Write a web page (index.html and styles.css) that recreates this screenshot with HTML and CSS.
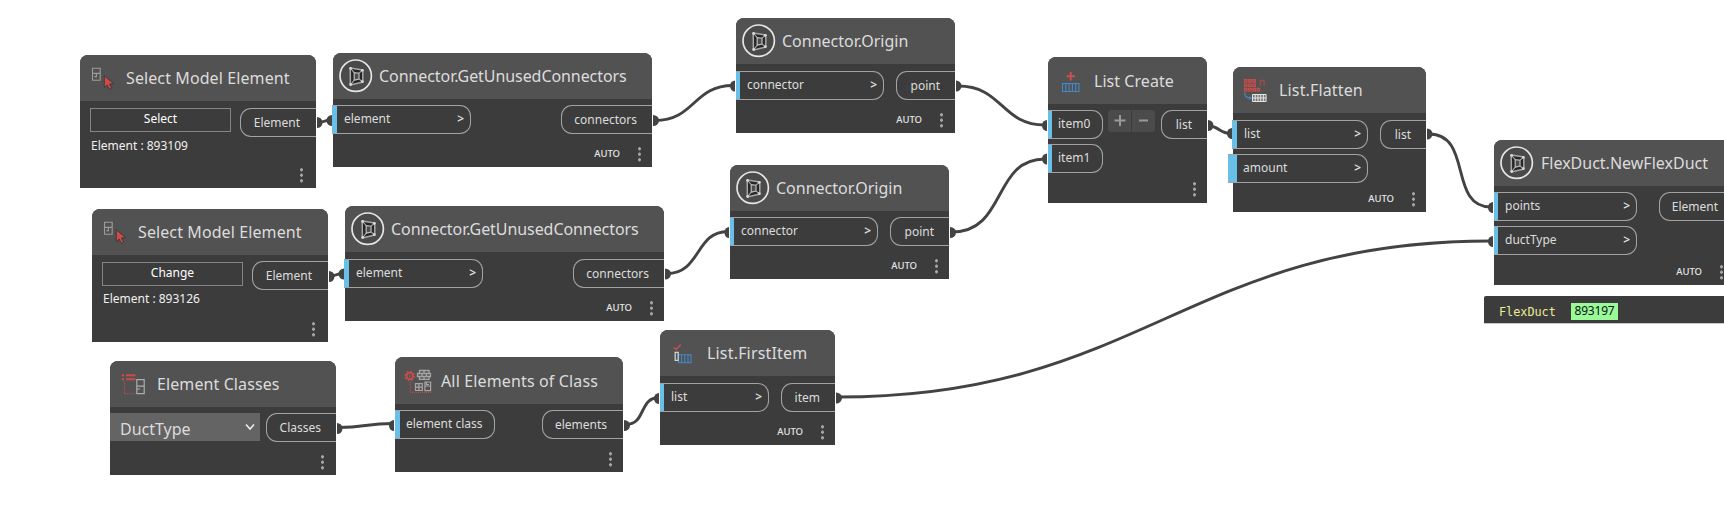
FILE: index.html
```html
<!DOCTYPE html>
<html lang="en">
<head>
<meta charset="utf-8">
<title>Graph workspace</title>
<link rel="stylesheet" href="styles.css">
</head>
<body>
<svg class="defs" width="0" height="0" aria-hidden="true">
  <defs>
    <symbol id="i-frame" viewBox="0 0 46 46">
      <circle cx="22.700" cy="22.700" r="15.700" fill="#4a4a4a" stroke="#e6e6e6" stroke-width="1.700"/>
      <path d="M17.200 15l12.600 2v12l-12.400 3z" fill="#262626" stroke="#a8a8a8" stroke-width="1.500" stroke-linejoin="round"/>
      <path d="M21.200 19.600l4.800.6v5.800l-4.800 1.200z" fill="#4d4d4d" stroke="#bcbcbc" stroke-width="1.200"/>
      <path d="M17.200 15l4 4.600M29.800 17l-3.800 3.200M29.800 29l-3.800-3M17.400 32l3.800-4.800" stroke="#a8a8a8" stroke-width="1.100" fill="none"/>
      <g fill="#d8d8d8"><circle cx="17.600" cy="15.400" r="1.400"/><circle cx="29.300" cy="17.300" r="1.400"/><circle cx="29.300" cy="28.700" r="1.400"/><circle cx="17.700" cy="31.500" r="1.400"/></g>
    </symbol>
    <symbol id="i-select" viewBox="0 0 46 46">
      <path d="M12.500 13.200h7.700v12h-7.700zM12.500 18.400h7.700M16.400 18.400v3.200h-2" fill="none" stroke="#9c9c9c" stroke-width="1.100"/>
      <path d="M24.300 20.700v12l2.900-2.600 2.100 4.200 2.400-1.100-2.200-4.200 4.300-.2z" fill="#cf4a48" stroke="#383838" stroke-width=".9"/>
    </symbol>
    <symbol id="i-create" viewBox="0 0 46 46">
      <path d="M22.700 14v8.400M18.500 18.200h8.400" stroke="#d04e4e" stroke-width="1.900"/>
      <path d="M14.500 25.500h16.400v8H14.500zM17.800 25.500v8M21.100 25.500v8M24.400 25.500v8M27.700 25.500v8" fill="none" stroke="#4389cb" stroke-width="1.100"/>
    </symbol>
    <symbol id="i-flatten" viewBox="0 0 46 46">
      <path d="M11.500 12.700h2.500v2.500h-2.500zM15.700 12.700h2.500v2.500h-2.500zM19.900 12.700h2.500v2.500h-2.500zM11.500 17h2.500v2.500h-2.500zM15.700 17h2.500v2.500h-2.500zM19.900 17h2.500v2.500h-2.500zM11.500 21.300h2.500v2.500h-2.500zM15.700 21.300h2.500v2.500h-2.500zM19.900 21.300h2.500v2.500h-2.500zM24.100 21.300h2.500v2.500h-2.500z" fill="#7d4f4f" stroke="#c94c4b" stroke-width="1.200"/>
      <path d="M27.300 19v-5.600h3.800V19" fill="none" stroke="#a84a4a" stroke-width="1.200"/>
      <path d="M11.600 25.500c0 3 2 5.400 5.600 5.600" fill="none" stroke="#4c84bd" stroke-width="1.200"/>
      <path d="M16.200 29l3.200 2.200-3.400 1.800z" fill="#4c84bd"/>
      <path d="M19.500 27.500h13.600v7H19.500zM19.500 31h13.600M22.200 27.500v7M25 27.500v7M27.700 27.500v7M30.400 27.500v7" fill="#777" stroke="#e4e4e4" stroke-width="1"/>
    </symbol>
    <symbol id="i-classes" viewBox="0 0 46 46">
      <path d="M11.700 14.300H14M16 14.300h9.400M11.700 18.300H14M16 18.300h9.400" stroke="#c94c4b" stroke-width="2.100"/>
      <path d="M14.400 20v12.800H26" fill="none" stroke="#c94c4b" stroke-width="1" stroke-dasharray="1.200 1"/>
      <path d="M26.800 18.700h7.400v14h-7.400zM26.800 25.200h7.400M26.800 28h3.400" fill="none" stroke="#adadad" stroke-width="1.200"/>
    </symbol>
    <symbol id="i-elements" viewBox="0 0 46 46">
      <circle cx="14.700" cy="18" r="3.200" fill="none" stroke="#c94c4b" stroke-width="1.700"/>
      <circle cx="14.700" cy="18" r="4.600" fill="none" stroke="#c94c4b" stroke-width="1.500" stroke-dasharray="1.800 1.800"/>
      <circle cx="14.700" cy="18" r=".9" fill="#c94c4b"/>
      <path d="M15.300 24v10.300H36" fill="none" stroke="#c94c4b" stroke-width="1" stroke-dasharray="1.200 .8"/>
      <path d="M24.500 12.500h9.500v3H24.500zM22.500 15.500h13v3h-13zM24.500 18.500h9.500v2.800H24.500zM29 12.500v3M27 15.500v3M31.500 15.500v3M29 18.500v2.800" fill="none" stroke="#a6a6a6" stroke-width="1.300"/>
      <path d="M20.500 25.700h6.800v6.800h-6.800zM23.900 25.700v6.800M20.500 29.100h6.800M29.900 24h5.700v8.600h-5.700zM29.900 28h5.700M31.500 24v2.500h2.500" fill="none" stroke="#a6a6a6" stroke-width="1.200"/>
    </symbol>
    <symbol id="i-first" viewBox="0 0 46 46">
      <path d="M13.700 17.200l2.500 2.200 4.500-4.800" fill="none" stroke="#c94c4b" stroke-width="1.500"/>
      <path d="M18.500 24.700h12.500v8H18.500zM21.600 24.700v8M24.800 24.700v8M28 24.700v8" fill="none" stroke="#4389cb" stroke-width="1.100"/>
      <path d="M15.200 22.400h3v8h-3z" fill="none" stroke="#cfcfcf" stroke-width="1.300"/>
    </symbol>
  </defs>
</svg>

<main class="canvas">
  <svg class="wires" viewBox="0 0 1724 526">
    <g class="wire">
      <path d="M318 122.500C325 122.500 324 120 331 120"/>
      <path d="M655 120.500C695 120.500 693 85.500 733 85.500"/>
      <path d="M958 86C1003 86 1001 125 1045 125"/>
      <path d="M952 232C1007 232 992 159 1045 159"/>
      <path d="M1209 126C1219 126 1219 133.500 1231 133.500"/>
      <path d="M1429 134C1473 134 1448 207 1491 207"/>
      <path d="M838 397C1142 397 1187 241 1491 241"/>
      <path d="M330 276C337 276 336 273.500 343 273.500"/>
      <path d="M667 273.500C701 273.500 695 231.500 728 231.500"/>
      <path d="M339 427.500C365 427.500 366 423.500 393 423.500"/>
      <path d="M626 424.500C646 424.500 639 397.500 659 397.500"/>
    </g>
    <g class="plug">
      <path d="M317 117a5.500 5.500 0 0 1 0 11z"/><path d="M332 115a5.500 5.500 0 0 0 0 11z"/>
      <path d="M653 115a6 5.500 0 0 1 0 11z"/><path d="M735 80.500a5 5.500 0 0 0 0 11z"/>
      <path d="M956 80.500a5.500 5.500 0 0 1 0 11z"/><path d="M1047 120a5 5.500 0 0 0 0 11z"/>
      <path d="M950 227a6 5.500 0 0 1 0 11z"/><path d="M1047 153.500a5 5.500 0 0 0 0 11z"/>
      <path d="M1208 120a5.500 5.500 0 0 1 0 11z"/><path d="M1232 128a5 5.500 0 0 0 0 11z"/>
      <path d="M1427 128.500a5.500 5.500 0 0 1 0 11z"/><path d="M1493 202a5 5.500 0 0 0 0 11z"/>
      <path d="M836 392.500a6 5.500 0 0 1 0 11z"/><path d="M1493 236a5 5.500 0 0 0 0 11z"/>
      <path d="M329 271a5.500 5.500 0 0 1 0 11z"/><path d="M344 268.500a5.500 5.500 0 0 0 0 11z"/>
      <path d="M665 268.500a6 5.500 0 0 1 0 11z"/><path d="M729 227a4.500 5.500 0 0 0 0 11z"/>
      <path d="M337 423a5.500 5.500 0 0 1 0 11z"/><path d="M394 420a5 5.500 0 0 0 0 11z"/>
      <path d="M624 420a6 5.500 0 0 1 0 11z"/><path d="M659 393a5 5.500 0 0 0 0 11z"/>
    </g>
  </svg>

  <section class="node n-select-a">
    <header class="head"><svg class="icon"><use href="#i-select"/></svg><h2>Select Model Element</h2></header>
    <div class="ports low">
      <div class="pick"><button class="pick-btn">Select</button><p>Element : 893109</p></div>
      <div class="out">Element</div>
    </div>
    <footer class="foot"><i class="dots"></i></footer>
  </section>

  <section class="node n-select-b">
    <header class="head"><svg class="icon"><use href="#i-select"/></svg><h2>Select Model Element</h2></header>
    <div class="ports low">
      <div class="pick"><button class="pick-btn">Change</button><p>Element : 893126</p></div>
      <div class="out">Element</div>
    </div>
    <footer class="foot"><i class="dots"></i></footer>
  </section>

  <section class="node n-unused-a">
    <header class="head"><svg class="icon"><use href="#i-frame"/></svg><h2>Connector.GetUnusedConnectors</h2></header>
    <div class="ports">
      <div class="ins"><div class="in wide-tab">element<b>&gt;</b></div></div>
      <div class="out">connectors</div>
    </div>
    <footer class="foot"><span>AUTO</span><i class="dots"></i></footer>
  </section>

  <section class="node n-unused-b">
    <header class="head"><svg class="icon"><use href="#i-frame"/></svg><h2>Connector.GetUnusedConnectors</h2></header>
    <div class="ports">
      <div class="ins"><div class="in wide-tab">element<b>&gt;</b></div></div>
      <div class="out">connectors</div>
    </div>
    <footer class="foot"><span>AUTO</span><i class="dots"></i></footer>
  </section>

  <section class="node n-origin-a">
    <header class="head"><svg class="icon"><use href="#i-frame"/></svg><h2>Connector.Origin</h2></header>
    <div class="ports">
      <div class="ins"><div class="in">connector<b>&gt;</b></div></div>
      <div class="out">point</div>
    </div>
    <footer class="foot"><span>AUTO</span><i class="dots"></i></footer>
  </section>

  <section class="node n-origin-b">
    <header class="head"><svg class="icon"><use href="#i-frame"/></svg><h2>Connector.Origin</h2></header>
    <div class="ports">
      <div class="ins"><div class="in">connector<b>&gt;</b></div></div>
      <div class="out">point</div>
    </div>
    <footer class="foot"><span>AUTO</span><i class="dots"></i></footer>
  </section>

  <section class="node n-create">
    <header class="head"><svg class="icon"><use href="#i-create"/></svg><h2>List Create</h2></header>
    <div class="ports">
      <div class="ins"><div class="in">item0</div><div class="in">item1</div></div>
      <div class="steps">
        <svg viewBox="0 0 23 22"><path d="M6.500 10.500h11M12 5v11"/></svg>
        <svg viewBox="0 0 23 22"><path d="M7 10.500h9"/></svg>
      </div>
      <div class="out">list</div>
    </div>
    <footer class="foot"><i class="dots"></i></footer>
  </section>

  <section class="node n-flatten">
    <header class="head"><svg class="icon"><use href="#i-flatten"/></svg><h2>List.Flatten</h2></header>
    <div class="ports">
      <div class="ins"><div class="in wide-tab">list<b>&gt;</b></div><div class="in wide-tab default">amount<b>&gt;</b></div></div>
      <div class="out">list</div>
    </div>
    <footer class="foot"><span>AUTO</span><i class="dots"></i></footer>
  </section>

  <section class="node n-duct">
    <header class="head"><svg class="icon"><use href="#i-frame"/></svg><h2>FlexDuct.NewFlexDuct</h2></header>
    <div class="ports">
      <div class="ins"><div class="in">points<b>&gt;</b></div><div class="in">ductType<b>&gt;</b></div></div>
      <div class="out">Element</div>
    </div>
    <footer class="foot"><span>AUTO</span><i class="dots"></i></footer>
  </section>

  <aside class="preview"><span class="kind">FlexDuct</span><span class="id">893197</span></aside>

  <section class="node n-classes">
    <header class="head"><svg class="icon"><use href="#i-classes"/></svg><h2>Element Classes</h2></header>
    <div class="ports">
      <div class="combo">DuctType<svg viewBox="0 0 10 8"><path d="M1 1.500l4 4.500 4-4.500"/></svg></div>
      <div class="out">Classes</div>
    </div>
    <footer class="foot"><i class="dots"></i></footer>
  </section>

  <section class="node n-elements">
    <header class="head"><svg class="icon"><use href="#i-elements"/></svg><h2>All Elements of Class</h2></header>
    <div class="ports">
      <div class="ins"><div class="in">element class</div></div>
      <div class="out">elements</div>
    </div>
    <footer class="foot"><i class="dots"></i></footer>
  </section>

  <section class="node n-first">
    <header class="head"><svg class="icon"><use href="#i-first"/></svg><h2>List.FirstItem</h2></header>
    <div class="ports">
      <div class="ins"><div class="in">list<b>&gt;</b></div></div>
      <div class="out">item</div>
    </div>
    <footer class="foot"><span>AUTO</span><i class="dots"></i></footer>
  </section>
</main>
</body>
</html>
```

FILE: styles.css
```css
* { box-sizing: border-box; margin: 0; padding: 0; }
body {
  background: #fff;
  font-family: "Noto Sans", "Open Sans", sans-serif;
  font-size: 12px;
  color: #dcdcdc;
}
.defs { position: absolute; }
.canvas { position: relative; width: 1724px; height: 526px; overflow: hidden; }
.wires { position: absolute; inset: 0; width: 1724px; height: 526px; }
.wire path { fill: none; stroke: #434343; stroke-width: 2.9; }
.plug path { fill: #434343; }

/* Nodes are free-placed on the canvas */
.node {
  position: absolute;
  display: flex;
  flex-direction: column;
  background: #3c3c3c;
  border-radius: 8px 8px 0 0;
  --gap: 6px;
  --track: 0;
  --label: 7px;
}
.n-select-a { left: 80px; top: 55px; width: 236px; height: 133px; --track: .1px; }
.n-select-b { left: 92px; top: 209px; width: 236px; height: 133px; --track: .1px; }
.n-unused-a { left: 333px; top: 53px; width: 319px; height: 114px; --in: 139px; --out: 91px; --track: -.07px; }
.n-unused-b { left: 345px; top: 206px; width: 319px; height: 115px; --in: 139px; --out: 91px; --gap: 7px; --track: -.07px; }
.n-origin-a { left: 736px; top: 18px; width: 219px; height: 115px; --in: 148px; --out: 59px; --gap: 7px; }
.n-origin-b { left: 730px; top: 165px; width: 219px; height: 114px; --in: 148px; --out: 59px; }
.n-create { left: 1048px; top: 57px; width: 159px; height: 146px; --in: 55px; --out: 46px; --track: .05px; }
.n-flatten { left: 1233px; top: 67px; width: 193px; height: 145px; --in: 136px; --out: 46px; --gap: 7px; --track: .15px; }
.n-duct { left: 1494px; top: 140px; width: 240px; height: 145px; --in: 143px; --out: 75px; }
.n-classes { left: 110px; top: 361px; width: 226px; height: 114px; --out: 70px; --track: .1px; }
.n-elements { left: 395px; top: 357px; width: 228px; height: 115px; --in: 100px; --out: 81px; --track: .14px; }
.n-first { left: 660px; top: 330px; width: 175px; height: 115px; --in: 109px; --out: 54px; --gap: 7px; --track: .18px; }
.n-duct h2, .n-classes h2, .n-first h2 { padding-left: 1px; }

.head {
  display: grid;
  grid-template-columns: 46px 1fr;
  align-items: center;
  height: 46px;
  background: #525252;
  border-radius: 8px 8px 0 0;
}
.n-create .head, .n-elements .head { height: 47px; }
.icon { width: 46px; height: 46px; display: block; }
.head h2 {
  font-size: 16px;
  font-weight: 400;
  line-height: 22px;
  letter-spacing: var(--track);
  color: #dcdcdc;
  white-space: nowrap;
}

.ports { display: flex; justify-content: space-between; align-items: flex-start; padding-top: var(--gap); }
.ports.low { --gap: 7px; --out: 76px; }
.ins { display: flex; flex-direction: column; gap: 5px; }
.in, .out {
  display: flex;
  align-items: center;
  height: 29px;
  line-height: 26px;
  border: 1px solid #a3a3a3;
  white-space: nowrap;
}
.in {
  width: var(--in);
  padding: 0 6px 2px 0;
  border-left: 0;
  border-radius: 0 11px 11px 0;
  background: #3c3c3c;
}
.in::before { content: ""; width: 4px; height: 27px; margin: 0 var(--label) -2px 0; background: #68bfe8; flex: none; }
.in b { font-weight: 600; font-size: 12px; margin-left: auto; }
.in.wide-tab { margin-left: -1px; }
.in.wide-tab::before { width: 5px; }
.in.default { margin-left: -5px; width: calc(var(--in) + 4px); }
.in.default::before { width: 9px; margin-right: 6px; }
.out {
  width: var(--out);
  justify-content: flex-end;
  padding: 0 15px 0 0;
  border-right: 0;
  border-radius: 11px 0 0 11px;
}
.n-create .in::before { margin-right: 6px; }
.n-elements .in::before { width: 5px; margin-right: 6px; }
.n-select-a .out, .n-select-b .out, .n-elements .out, .n-duct .out { padding-right: 16px; }

.pick { width: 141px; margin-left: 10px; }
.pick-btn {
  display: block;
  width: 141px;
  height: 24px;
  border: 1px solid #858585;
  background: none;
  color: #fff;
  font: 12px/20px "Noto Sans", sans-serif;
  padding-bottom: 3px;
}
.pick p { margin: 6px 0 0 1px; line-height: 16px; color: #f0f0f0; white-space: nowrap; }
.n-select-b .ports { --gap: 6px; }
.n-select-b .pick-btn { margin-top: 1px; }
.n-select-b .pick p { margin-top: 5px; }

.steps { display: flex; gap: 1px; margin: 0 auto 0 5px; }
.steps svg { width: 23px; height: 22px; background: #4b4b4b; border-radius: 3px 0 0 3px; fill: none; stroke: #999; stroke-width: 2; }
.steps svg + svg { border-radius: 0 3px 3px 0; }

.combo {
  display: flex;
  align-items: center;
  justify-content: space-between;
  width: 150px;
  height: 28px;
  padding: 3px 5px 0 10px;
  background: #646464;
  font-size: 16px;
}
.combo svg { width: 10px; height: 8px; margin-top: -4px; fill: none; stroke: #f0f0f0; stroke-width: 1.5; }

.foot { display: flex; justify-content: flex-end; align-items: center; gap: 18px; margin-top: auto; padding: 0 11px 5px 0; }
.foot span { font-size: 9.5px; font-weight: 500; line-height: 14px; color: #e6e6e6; }
.dots {
  width: 3px;
  height: 16px;
  background: radial-gradient(circle, #a8a8a8 1.3px, transparent 1.8px) 0 0 / 3px 5.5px;
}
.n-create .foot { padding-bottom: 6px; }
.n-select-a .foot, .n-select-b .foot { padding: 0 13px 5px 0; }
.n-classes .foot { padding-right: 12px; }
.n-origin-a .foot { padding-right: 12px; }

.preview {
  position: absolute;
  left: 1484px;
  top: 296px;
  width: 250px;
  height: 27px;
  display: flex;
  align-items: center;
  padding-left: 15px;
  background: #3c3c3c;
  border-radius: 2px 0 0 0;
  box-shadow: 0 1px 0 #c8c8c8;
}
.kind { font: 11.8px/16px "DejaVu Sans Mono", monospace; color: #ecec96; width: 72px; padding-top: 4px; }
.id { width: 47px; height: 17px; margin-top: 3px; text-align: center; line-height: 15px; background: #98fb98; color: #111; letter-spacing: -.2px; }
```
